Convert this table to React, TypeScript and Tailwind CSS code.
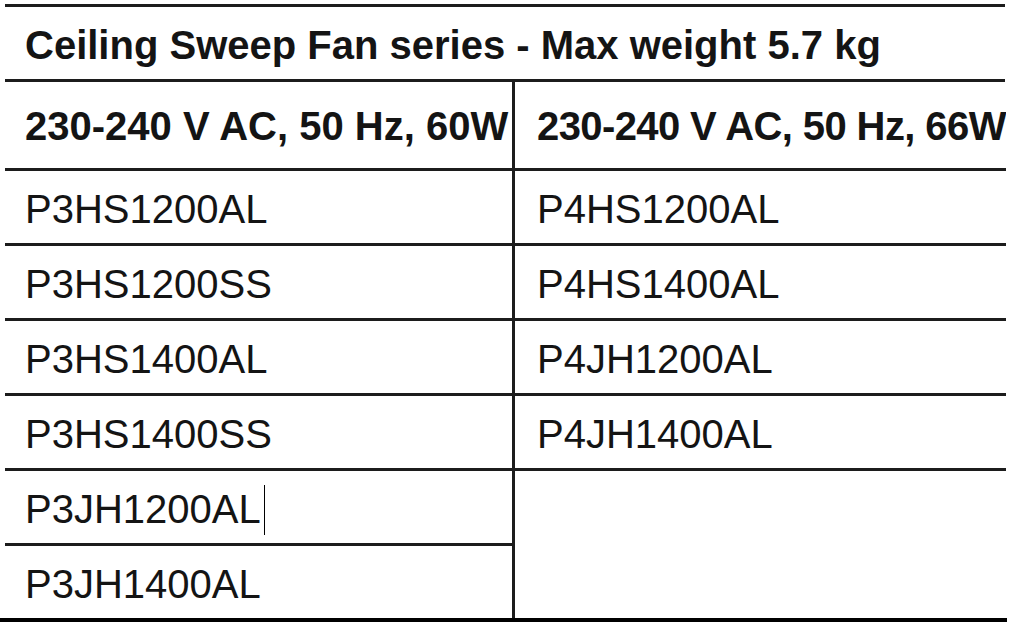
const left = ["P3HS1200AL", "P3HS1200SS", "P3HS1400AL", "P3HS1400SS", "P3JH1200AL", "P3JH1400AL"];
const right = ["P4HS1200AL", "P4HS1400AL", "P4JH1200AL", "P4JH1400AL"];

function Cell({ text, last, caret, pad }: { text: string; last?: boolean; caret?: boolean; pad: string }) {
  return (
    <div
      className={`flex items-center pt-[3px] ${pad} ${last ? "h-[72px]" : "h-[75px] border-b-[3px] border-[#1c1c1c]"}`}
    >
      <span className="whitespace-nowrap">{text}</span>
      {caret && <span className="ml-[3px] mt-[2px] inline-block h-[50px] w-px bg-black" />}
    </div>
  );
}

export default function App() {
  return (
    <div
      className="h-[624px] w-[1014px] overflow-hidden bg-white pt-[4px] text-[40px] leading-none text-[#141414]"
      style={{ fontFamily: '"Liberation Sans", Arial, sans-serif' }}
    >
      <div className="ml-[5px] w-[1000px] border-t-[3px] border-[#1c1c1c]">
        <div className="flex h-[75px] items-center border-b-[3px] border-[#1c1c1c] pl-[20px] pt-[4px] font-bold">
          Ceiling Sweep Fan series - Max weight 5.7 kg
        </div>
        <div className="grid h-[536px] grid-cols-[510px_1fr]">
          <div className="flex flex-col border-r-[3px] border-[#1c1c1c]">
            <div className="flex h-[89px] items-center border-b-[3px] border-[#1c1c1c] pl-[20px] pt-[2px] font-bold">
              <span className="whitespace-nowrap">230-240 V AC, 50 Hz, 60W</span>
            </div>
            {left.map((t, i) => (
              <Cell key={t} text={t} pad="pl-[20px]" caret={i === 4} last={i === left.length - 1} />
            ))}
          </div>
          <div className="flex flex-col">
            <div className="flex h-[89px] items-center overflow-hidden border-b-[3px] border-[#1c1c1c] pl-[22px] pt-[2px] font-bold">
              <span className="whitespace-nowrap tracking-[-0.6px]">230-240 V AC, 50 Hz, 66W</span>
            </div>
            {right.map((t) => (
              <Cell key={t} text={t} pad="pl-[22px]" />
            ))}
          </div>
        </div>
      </div>
      <div className="h-[4px] w-[1007px] bg-black" />
    </div>
  );
}
